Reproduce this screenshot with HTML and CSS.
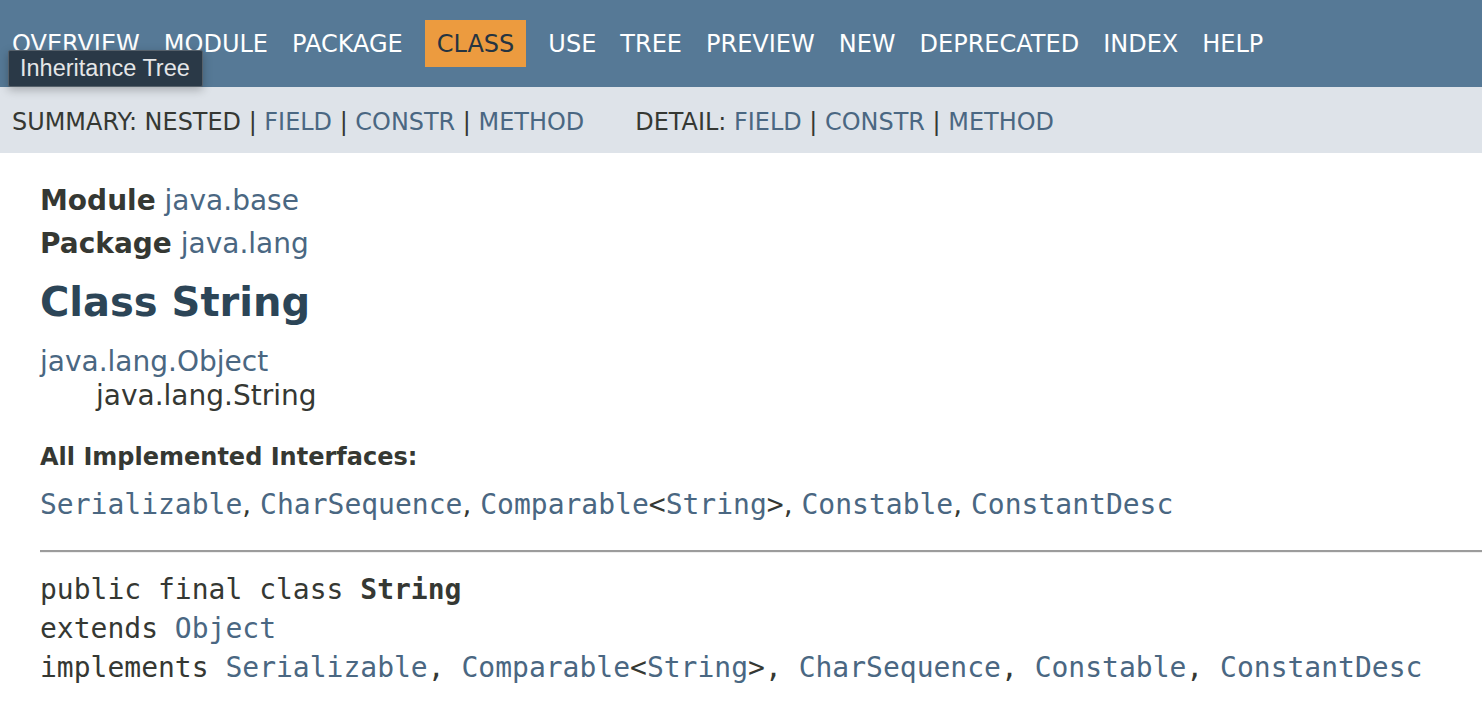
FILE: index.html
```html
<!DOCTYPE html>
<html lang="en">
<head>
<meta charset="utf-8">
<title>String (Java SE)</title>
<link rel="stylesheet" href="styles.css">
</head>
<body>
<header class="flex-header">
  <nav class="top-nav">
    <ul class="nav-list">
      <li><a href="#">Overview</a></li>
      <li><a href="#">Module</a></li>
      <li><a href="#">Package</a></li>
      <li class="nav-current">Class</li>
      <li><a href="#">Use</a></li>
      <li><a href="#" class="tree-link">Tree</a></li>
      <li><a href="#">Preview</a></li>
      <li><a href="#">New</a></li>
      <li><a href="#">Deprecated</a></li>
      <li><a href="#">Index</a></li>
      <li><a href="#">Help</a></li>
    </ul>
    <div class="tooltip">Inheritance Tree</div>
  </nav>
  <div class="sub-nav">
    <div class="sub-nav-list">Summary:&nbsp;Nested&nbsp;|&nbsp;<a href="#">Field</a>&nbsp;|&nbsp;<a href="#">Constr</a>&nbsp;|&nbsp;<a href="#">Method</a></div>
    <div class="sub-nav-list">Detail:&nbsp;<a href="#">Field</a>&nbsp;|&nbsp;<a href="#">Constr</a>&nbsp;|&nbsp;<a href="#">Method</a></div>
  </div>
</header>
<main class="content">
  <div class="header">
    <div class="sub-title"><span class="label">Module</span>&nbsp;<a href="#">java.base</a></div>
    <div class="sub-title"><span class="label">Package</span>&nbsp;<a href="#">java.lang</a></div>
    <h1 class="title">Class String</h1>
  </div>
  <div class="inheritance">
    <a href="#">java.lang.Object</a>
    <div class="inheritance-child">java.lang.String</div>
  </div>
  <dl class="notes">
    <dt>All Implemented Interfaces:</dt>
    <dd><code><a href="#">Serializable</a></code>, <code><a href="#">CharSequence</a></code>, <code><a href="#">Comparable</a>&lt;<a href="#">String</a>&gt;</code>, <code><a href="#">Constable</a></code>, <code><a href="#">ConstantDesc</a></code></dd>
  </dl>
  <hr class="divider">
  <div class="type-signature">
    <span class="sig-line">public final class <span class="type-name">String</span></span>
    <span class="sig-line">extends <a href="#">Object</a></span>
    <span class="sig-line">implements <a href="#">Serializable</a>, <a href="#">Comparable</a>&lt;<a href="#">String</a>&gt;, <a href="#">CharSequence</a>, <a href="#">Constable</a>, <a href="#">ConstantDesc</a></span>
  </div>
</main>
</body>
</html>
```
FILE: styles.css
```css
html, body {
  margin: 0;
  padding: 0;
  background: #ffffff;
}
body {
  font-family: "DejaVu Sans", Arial, sans-serif;
  color: #353833;
  font-size: 28px;
  overflow: hidden;
}
a {
  color: #4a6782;
  text-decoration: none;
}

/* top nav */
.top-nav {
  position: relative;
  background: #567996;
  height: 87px;
  box-sizing: border-box;
  padding-top: 20px;
}
.nav-list {
  display: flex;
  margin: 0;
  padding: 0;
  list-style: none;
}
.nav-list li {
  padding: 11px 12px 9px 12px;
  line-height: 27px;
  font-size: 24px;
  text-transform: uppercase;
  color: #ffffff;
}
.nav-list li a {
  color: #ffffff;
}
.nav-list li.nav-current {
  background: #ec9b3f;
  color: #253441;
  margin: 0 10px;
}
.tooltip {
  position: absolute;
  left: 8px;
  top: 50px;
  width: 195px;
  height: 37px;
  box-sizing: border-box;
  background: #2a3947;
  border: 1px solid #56616b;
  border-radius: 2px;
  box-shadow: 0 3px 10px rgba(0, 0, 0, 0.25);
  color: #e4e6e8;
  font-family: "Liberation Sans", Arial, sans-serif;
  font-size: 23.5px;
  line-height: 35px;
  padding-left: 11px;
  z-index: 2;
}

/* sub nav */
.sub-nav {
  display: flex;
  gap: 51px;
  background: #dee3e9;
  height: 66px;
  box-sizing: border-box;
  padding: 20px 0 0 12px;
}
.sub-nav-list {
  font-size: 23.95px;
  line-height: 30px;
  text-transform: uppercase;
  color: #353833;
}

/* content */
.content {
  padding-left: 40px;
}
.header {
  padding-top: 31px;
}
.sub-title {
  line-height: 34px;
  margin-bottom: 9px;
}
.sub-title .label {
  font-weight: bold;
}
.title {
  margin: 17px 0 0 0;
  font-size: 40px;
  line-height: 48px;
  color: #2c4557;
  font-weight: bold;
}
.inheritance {
  margin-top: 19px;
  line-height: 34px;
}
.inheritance-child {
  margin-left: 56px;
}
.notes {
  margin: 30px 0 0 0;
}
.notes dt {
  font-size: 24px;
  line-height: 28px;
  font-weight: bold;
  color: #353833;
}
.notes dd {
  margin: 17px 0 0 0;
  line-height: 34px;
}
code, .type-signature {
  font-family: "DejaVu Sans Mono", monospace;
  font-size: 28px;
}
.divider {
  margin: 28px 0 0 0;
  border: 0;
  border-top: 2px solid #9c9c9c;
  border-bottom: 1px solid #efefef;
  height: 0;
}
.type-signature {
  margin-top: 17px;
  line-height: 39px;
}
.sig-line {
  display: block;
  white-space: pre;
}
.type-name {
  font-weight: bold;
}
```
